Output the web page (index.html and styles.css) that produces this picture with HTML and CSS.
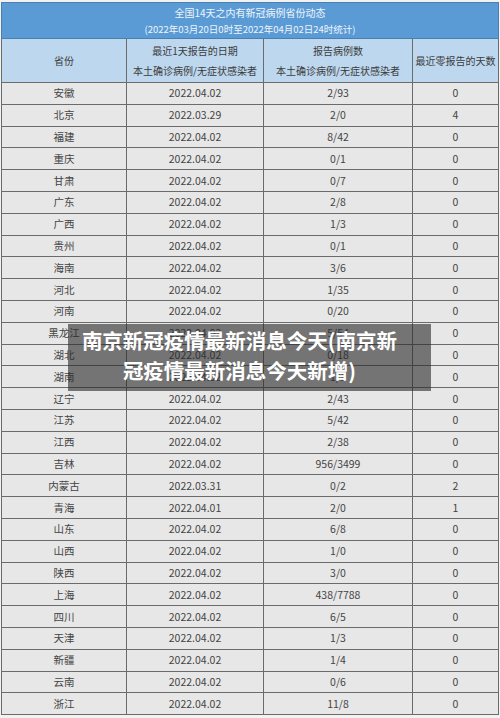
FILE: index.html
```html
<!DOCTYPE html>
<html lang="zh-CN">
<head>
<meta charset="utf-8">
<title>全国14天之内有新冠病例省份动态</title>
<link rel="stylesheet" href="styles.css">
</head>
<body>
<div class="page">
  <table class="covid">
    <colgroup>
      <col class="c1"><col class="c2"><col class="c3"><col class="c4">
    </colgroup>
    <thead>
      <tr class="title-row">
        <th colspan="4">
          <div class="t1">全国14天之内有新冠病例省份动态</div>
          <div class="t2">(2022年03月20日0时至2022年04月02日24时统计)</div>
        </th>
      </tr>
      <tr class="head-row">
        <th>省份</th>
        <th><div>最近1天报告的日期</div><div>本土确诊病例/无症状感染者</div></th>
        <th><div>报告病例数</div><div>本土确诊病例/无症状感染者</div></th>
        <th>最近零报告的天数</th>
      </tr>
    </thead>
    <tbody>
      <tr><td>安徽</td><td>2022.04.02</td><td>2/93</td><td>0</td></tr>
      <tr><td>北京</td><td>2022.03.29</td><td>2/0</td><td>4</td></tr>
      <tr><td>福建</td><td>2022.04.02</td><td>8/42</td><td>0</td></tr>
      <tr><td>重庆</td><td>2022.04.02</td><td>0/1</td><td>0</td></tr>
      <tr><td>甘肃</td><td>2022.04.02</td><td>0/7</td><td>0</td></tr>
      <tr><td>广东</td><td>2022.04.02</td><td>2/8</td><td>0</td></tr>
      <tr><td>广西</td><td>2022.04.02</td><td>1/3</td><td>0</td></tr>
      <tr><td>贵州</td><td>2022.04.02</td><td>0/1</td><td>0</td></tr>
      <tr><td>海南</td><td>2022.04.02</td><td>3/6</td><td>0</td></tr>
      <tr><td>河北</td><td>2022.04.02</td><td>1/35</td><td>0</td></tr>
      <tr><td>河南</td><td>2022.04.02</td><td>0/20</td><td>0</td></tr>
      <tr><td>黑龙江</td><td>2022.04.02</td><td>5/54</td><td>0</td></tr>
      <tr><td>湖北</td><td>2022.04.02</td><td>0/18</td><td>0</td></tr>
      <tr><td>湖南</td><td>2022.04.02</td><td>1/1</td><td>0</td></tr>
      <tr><td>辽宁</td><td>2022.04.02</td><td>2/43</td><td>0</td></tr>
      <tr><td>江苏</td><td>2022.04.02</td><td>5/42</td><td>0</td></tr>
      <tr><td>江西</td><td>2022.04.02</td><td>2/38</td><td>0</td></tr>
      <tr><td>吉林</td><td>2022.04.02</td><td>956/3499</td><td>0</td></tr>
      <tr><td>内蒙古</td><td>2022.03.31</td><td>0/2</td><td>2</td></tr>
      <tr><td>青海</td><td>2022.04.01</td><td>2/0</td><td>1</td></tr>
      <tr><td>山东</td><td>2022.04.02</td><td>6/8</td><td>0</td></tr>
      <tr><td>山西</td><td>2022.04.02</td><td>1/0</td><td>0</td></tr>
      <tr><td>陕西</td><td>2022.04.02</td><td>3/0</td><td>0</td></tr>
      <tr><td>上海</td><td>2022.04.02</td><td>438/7788</td><td>0</td></tr>
      <tr><td>四川</td><td>2022.04.02</td><td>6/5</td><td>0</td></tr>
      <tr><td>天津</td><td>2022.04.02</td><td>1/3</td><td>0</td></tr>
      <tr><td>新疆</td><td>2022.04.02</td><td>1/4</td><td>0</td></tr>
      <tr><td>云南</td><td>2022.04.02</td><td>0/6</td><td>0</td></tr>
      <tr><td>浙江</td><td>2022.04.02</td><td>11/8</td><td>0</td></tr>
    </tbody>
  </table>
  <div class="caption">南京新冠疫情最新消息今天(南京新冠疫情最新消息今天新增)</div>
</div>
</body>
</html>
```
FILE: styles.css
```css
html, body {
  margin: 0;
  padding: 0;
  background: #f2f2f2;
}
.page {
  position: relative;
  width: 500px;
  height: 718px;
  overflow: hidden;
  padding: 2px 0 0 1px;
  box-sizing: border-box;
  font-family: "Noto Sans CJK SC", "Noto Sans", sans-serif;
}
.covid {
  width: 497px;
  table-layout: fixed;
  border-collapse: collapse;
  color: #444;
  font-size: 10.5px;
  text-align: center;
}
.c1 { width: 125px; }
.c2 { width: 137px; }
.c3 { width: 149px; }
.c4 { width: 86px; }
.covid th, .covid td {
  border: 1px solid #6b6b6b;
  padding: 0;
  font-weight: normal;
  overflow: hidden;
  white-space: nowrap;
}
.title-row th {
  background: #5b9bd5;
  color: #eef4fb;
  height: 35px;
  border-color: #4a7fb0;
}
.t1 { font-size: 10px; line-height: 16px; }
.t2 { font-size: 9.5px; line-height: 16px; }
.head-row th {
  background: #bdd7ee;
  height: 43px;
  color: #3c3c3c;
  font-size: 10px;
  line-height: 20px;
}
.covid tbody td {
  background: #e7e7e7;
  height: 20.8px;
  line-height: 14px;
}
.caption {
  position: absolute;
  left: 68px;
  top: 324px;
  width: 363px;
  height: 67px;
  box-sizing: border-box;
  padding: 1px 26px 0 6px;
  background: rgba(40, 40, 40, 0.6);
  color: #fff;
  font-weight: bold;
  font-size: 20.5px;
  line-height: 30px;
  text-align: center;
}
```
